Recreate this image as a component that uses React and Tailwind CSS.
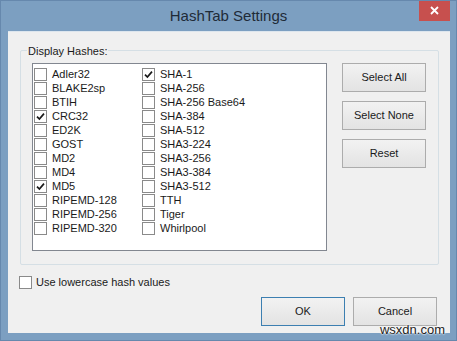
import React from 'react';

const leftHashes = [
  ['Adler32', false],
  ['BLAKE2sp', false],
  ['BTIH', false],
  ['CRC32', true],
  ['ED2K', false],
  ['GOST', false],
  ['MD2', false],
  ['MD4', false],
  ['MD5', true],
  ['RIPEMD-128', false],
  ['RIPEMD-256', false],
  ['RIPEMD-320', false],
];

const rightHashes = [
  ['SHA-1', true],
  ['SHA-256', false],
  ['SHA-256 Base64', false],
  ['SHA-384', false],
  ['SHA-512', false],
  ['SHA3-224', false],
  ['SHA3-256', false],
  ['SHA3-384', false],
  ['SHA3-512', false],
  ['TTH', false],
  ['Tiger', false],
  ['Whirlpool', false],
];

const CheckBox = ({ checked }) => (
  <div className="w-[13px] h-[13px] border border-[#8a8a8a] bg-white flex items-center justify-center shrink-0">
    {checked && (
      <svg width="9" height="9" viewBox="0 0 9 9">
        <path d="M1 4.6 L3.4 7 L8 1.6" fill="none" stroke="#1a1a1a" strokeWidth="1.7" />
      </svg>
    )}
  </div>
);

const HashRow = ({ label, checked }) => (
  <div className="h-[14px] flex items-center gap-[5px]">
    <CheckBox checked={checked} />
    <span className="leading-none text-[#1a1a1a]">{label}</span>
  </div>
);

const WinButton = ({ children, focused = false }) => (
  <button
    type="button"
    className={`w-[84px] h-[29px] border bg-gradient-to-b from-[#f2f2f2] to-[#e3e3e3] text-[#1a1a1a] flex items-center justify-center ${
      focused ? 'border-[#3c7fb1]' : 'border-[#acacac]'
    }`}
  >
    {children}
  </button>
);

export default function App() {
  return (
    <div
      className="w-[457px] h-[341px] bg-[#7c9fc1] border border-[#6688ad] flex flex-col relative overflow-hidden text-[11px]"
      style={{ fontFamily: '"Liberation Sans", Arial, sans-serif' }}
    >
      {/* Title bar */}
      <div className="h-[30px] relative flex items-center justify-center">
        <span className="text-[15px] text-[#1f2b38] mt-[1px]">HashTab Settings</span>
        <div className="absolute right-[6px] top-[-1px] w-[31px] h-[21px] bg-[#c7504e] flex items-center justify-center">
          <svg width="9" height="9" viewBox="0 0 9 9">
            <path d="M1 1 L8 8 M8 1 L1 8" stroke="white" strokeWidth="1.8" />
          </svg>
        </div>
      </div>

      {/* Client area */}
      <div className="ml-[7px] mr-[6px] mb-[7px] flex-1 bg-[#f0f0f0] border-t border-[#dde6ee] flex flex-col">
        {/* Group box */}
        <div className="mt-[18px] ml-[12px] mr-[11px] h-[215px] border border-[#d5dfe5] rounded-[2px] relative flex pt-[12px] pl-[11px] pr-[12px]">
          <span className="absolute left-[6px] top-[-8px] px-[1px] bg-[#f0f0f0] text-[#1a1a1a]">Display Hashes:</span>
          {/* List */}
          <div className="w-[295px] h-[188px] border border-[#828790] bg-white flex pt-[3px] pl-[1px]">
            <div className="w-[108px] flex flex-col">
              {leftHashes.map(([label, checked]) => (
                <HashRow key={label} label={label} checked={checked} />
              ))}
            </div>
            <div className="flex flex-col">
              {rightHashes.map(([label, checked]) => (
                <HashRow key={label} label={label} checked={checked} />
              ))}
            </div>
          </div>
          {/* Side buttons */}
          <div className="ml-[15px] flex flex-col gap-[9px]">
            <WinButton>Select All</WinButton>
            <WinButton>Select None</WinButton>
            <WinButton>Reset</WinButton>
          </div>
        </div>

        {/* Lowercase option */}
        <div className="mt-[9px] ml-[11px] flex items-center gap-[4px]">
          <CheckBox checked={false} />
          <span className="text-[#1a1a1a]">Use lowercase hash values</span>
        </div>

        {/* Dialog buttons */}
        <div className="mt-[6px] mr-[13px] flex justify-end gap-[8px]">
          <WinButton focused>OK</WinButton>
          <WinButton>Cancel</WinButton>
        </div>
      </div>

      {/* Watermark */}
      <span
        className="absolute right-[11px] bottom-[4px] text-[13px] text-[#222] leading-none"
        style={{ textShadow: '0 0 2px #fff, 0 0 2px #fff, 0 0 1px #fff' }}
      >
        wsxdn.com
      </span>
    </div>
  );
}
